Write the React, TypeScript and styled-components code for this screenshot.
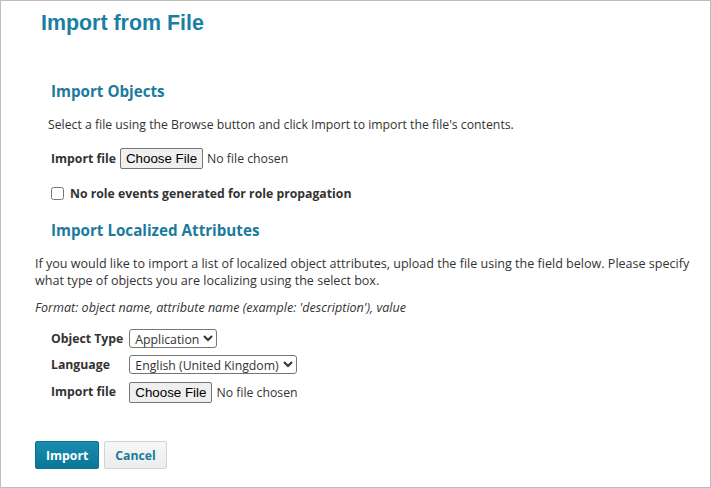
import React from "react";
import styled, { createGlobalStyle } from "styled-components";

const Global = createGlobalStyle`
  html, body { margin: 0; padding: 0; background: #fff; }
  body { font-family: "Open Sans", "Liberation Sans", sans-serif; color: #333; }
  * { box-sizing: border-box; }
`;

const Frame = styled.div`
  width: 711px;
  height: 488px;
  border: 1px solid #bdbdbd;
  padding: 10px 20px 0 34px;
  background: #fff;
  overflow: hidden;
`;

const Title = styled.h1`
  margin: 0 0 0 6px;
  font-family: "Liberation Sans", Arial, sans-serif;
  font-weight: 700;
  font-size: 21.4px;
  line-height: 24px;
  color: #1a80a2;
`;

const Heading = styled.h2<{ $top: number }>`
  margin: ${(p) => p.$top}px 0 0 16px;
  font-size: 15.2px;
  line-height: 22px;
  font-weight: 700;
  color: #1a7b9c;
`;

const Para = styled.p<{ $top: number; $indent?: number; $italic?: boolean; $size?: number }>`
  margin: ${(p) => p.$top}px 0 0 ${(p) => p.$indent ?? 0}px;
  font-size: ${(p) => p.$size ?? 12.25}px;
  line-height: 17px;
  font-style: ${(p) => (p.$italic ? "italic" : "normal")};
  color: #333;
`;

const FieldRow = styled.div`
  margin: 14px 0 0 16px;
  display: flex;
  align-items: center;
  gap: 4px;
  height: 22px;
`;

const Label = styled.label`
  font-size: 12.25px;
  font-weight: 700;
  color: #333;
`;

const FileInput = styled.input.attrs({ type: "file" })`
  font-family: "Open Sans", sans-serif;
  font-size: 12.25px;
  color: #333;
  &::file-selector-button {
    font-family: "Liberation Sans", Arial, sans-serif;
    font-size: 13.33px;
    color: #000;
    background: #efefef;
    border: 1px solid #767676;
    border-radius: 2px;
    padding: 1px 5px;
    height: 21px;
    margin-right: 4px;
  }
`;

const CheckRow = styled.label`
  margin: 15px 0 0 16px;
  display: flex;
  align-items: center;
  gap: 6px;
  height: 18px;
  font-size: 12.25px;
  font-weight: 700;
  color: #333;
  input {
    margin: 0;
    width: 13px;
    height: 13px;
  }
`;

const FormGrid = styled.div`
  margin: 10px 0 0 16px;
  display: grid;
  grid-template-columns: auto auto;
  grid-template-rows: 25px 26px 28px;
  justify-content: start;
  align-items: center;
  column-gap: 6px;
`;

const Select = styled.select`
  font-family: "Open Sans", sans-serif;
  font-size: 12.25px;
  color: #333;
  height: 19px;
  padding: 0 1px;
  border: 1px solid #767676;
  border-radius: 3px;
  background: #fff;
  justify-self: start;
`;

const Actions = styled.div`
  margin-top: 36px;
  display: flex;
  gap: 5px;
`;

const Button = styled.button<{ $primary?: boolean }>`
  height: 28px;
  padding: 0 10px;
  font-family: "Open Sans", sans-serif;
  font-size: 12.25px;
  font-weight: 700;
  border-radius: 2px;
  cursor: pointer;
  color: ${(p) => (p.$primary ? "#fff" : "#1a7b9c")};
  background: ${(p) =>
    p.$primary ? "linear-gradient(#168db2, #0b7696)" : "linear-gradient(#f7f7f7, #ececec)"};
  border: 1px solid ${(p) => (p.$primary ? "#0c6f8d" : "#d3d3d3")};
`;

export default function App() {
  return (
    <>
      <Global />
      <Frame>
        <Title>Import from File</Title>
        <Heading $top={45}>Import Objects</Heading>
        <Para $top={14} $indent={13}>
          Select a file using the Browse button and click Import to import the file's contents.
        </Para>
        <FieldRow>
          <Label>Import file</Label>
          <FileInput />
        </FieldRow>
        <CheckRow>
          <input type="checkbox" />
          No role events generated for role propagation
        </CheckRow>
        <Heading $top={17}>Import Localized Attributes</Heading>
        <Para $top={14} $size={12.55}>
          If you would like to import a list of localized object attributes, upload the file using the
          field below. Please specify what type of objects you are localizing using the select box.
        </Para>
        <Para $top={10} $italic $size={12.55}>
          Format: object name, attribute name (example: 'description'), value
        </Para>
        <FormGrid>
          <Label>Object Type</Label>
          <Select defaultValue="Application">
            <option>Application</option>
          </Select>
          <Label>Language</Label>
          <Select defaultValue="en-GB">
            <option value="en-GB">English (United Kingdom)</option>
          </Select>
          <Label>Import file</Label>
          <div>
            <FileInput />
          </div>
        </FormGrid>
        <Actions>
          <Button $primary>Import</Button>
          <Button>Cancel</Button>
        </Actions>
      </Frame>
    </>
  );
}
